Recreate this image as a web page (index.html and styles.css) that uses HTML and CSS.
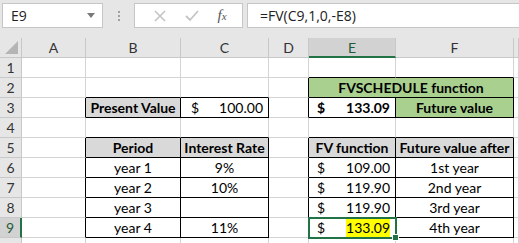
FILE: index.html
```html
<!DOCTYPE html>
<html lang="en">
<head>
  <meta charset="UTF-8">
  <title>FVSCHEDULE</title>
  <link rel="stylesheet" href="styles.css">
</head>
<body>
<div class="toolbar">
  <div class="namebox">
    <span>E9</span>
    <svg class="drop" width="8" height="5" viewBox="0 0 8 5"><path d="M0 0h8L4 5z" fill="#7a7a7a"/></svg>
  </div>
  <div class="dots"><i></i><i></i><i></i></div>
  <div class="fbuttons">
    <svg width="12" height="12" viewBox="0 0 12 12"><path d="M1 1l10 10M11 1L1 11" stroke="#c4c4c4" stroke-width="1.6"/></svg>
    <svg width="14" height="12" viewBox="0 0 14 12"><path d="M1 6l4 4 8-9" stroke="#c4c4c4" stroke-width="1.8" fill="none"/></svg>
    <span class="fx">f<small>x</small></span>
  </div>
  <div class="formula">=FV(C9,1,0,-E8)</div>
</div>

<div class="sheet">
  <!-- column headers -->
  <div class="ch corner"><span class="tri"></span></div>
  <div class="ch">A</div>
  <div class="ch">B</div>
  <div class="ch">C</div>
  <div class="ch">D</div>
  <div class="ch sel">E</div>
  <div class="ch">F</div>
  <div class="ch last"></div>

  <!-- row 1 -->
  <div class="rh">1</div>
  <div class="c"></div><div class="c"></div><div class="c"></div><div class="c"></div>
  <div class="c bb"></div><div class="c bb"></div><div class="c"></div>

  <!-- row 2 -->
  <div class="rh">2</div>
  <div class="c"></div><div class="c bb"></div><div class="c bb"></div><div class="c br"></div>
  <div class="c wide green bold mid br bb">FVSCHEDULE function</div>
  <div class="c"></div>

  <!-- row 3 -->
  <div class="rh">3</div>
  <div class="c br"></div>
  <div class="c grey bold mid br bb">Present Value</div>
  <div class="c acct wide-pad br bb"><span>$</span><span>100.00</span></div>
  <div class="c br"></div>
  <div class="c acct bold br bb"><span>$</span><span>133.09</span></div>
  <div class="c green bold mid br bb">Future value</div>
  <div class="c"></div>

  <!-- row 4 -->
  <div class="rh">4</div>
  <div class="c"></div><div class="c bb"></div><div class="c bb"></div><div class="c"></div>
  <div class="c bb"></div><div class="c bb"></div><div class="c"></div>

  <!-- row 5 -->
  <div class="rh">5</div>
  <div class="c br"></div>
  <div class="c grey bold mid br bb">Period</div>
  <div class="c grey bold mid br bb">Interest Rate</div>
  <div class="c br"></div>
  <div class="c grey bold mid br bb">FV function</div>
  <div class="c grey bold mid br bb">Future value after</div>
  <div class="c"></div>

  <!-- row 6 -->
  <div class="rh">6</div>
  <div class="c br"></div>
  <div class="c mid br bb">year 1</div>
  <div class="c mid br bb">9%</div>
  <div class="c br"></div>
  <div class="c acct br bb"><span>$</span><span>109.00</span></div>
  <div class="c mid br bb">1st year</div>
  <div class="c"></div>

  <!-- row 7 -->
  <div class="rh">7</div>
  <div class="c br"></div>
  <div class="c mid br bb">year 2</div>
  <div class="c mid br bb">10%</div>
  <div class="c br"></div>
  <div class="c acct br bb"><span>$</span><span>119.90</span></div>
  <div class="c mid br bb">2nd year</div>
  <div class="c"></div>

  <!-- row 8 -->
  <div class="rh">8</div>
  <div class="c br"></div>
  <div class="c mid br bb">year 3</div>
  <div class="c mid br bb"></div>
  <div class="c br"></div>
  <div class="c acct br bb"><span>$</span><span>119.90</span></div>
  <div class="c mid br bb">3rd year</div>
  <div class="c"></div>

  <!-- row 9 -->
  <div class="rh sel">9</div>
  <div class="c br"></div>
  <div class="c mid br bb">year 4</div>
  <div class="c mid br bb">11%</div>
  <div class="c br"></div>
  <div class="c acct br bb active"><span>$</span><span class="hl">133.09</span><i class="handle"></i></div>
  <div class="c mid br bb">4th year</div>
  <div class="c"></div>

  <!-- row 10, only its top edge is in view -->
  <div class="rh"></div>
  <div class="c"></div><div class="c"></div><div class="c"></div><div class="c"></div>
  <div class="c"></div><div class="c"></div><div class="c"></div>
</div>
</body>
</html>
```

FILE: styles.css
```css
body{
  margin: 0;
  width: 519px;
  height: 243px;
  overflow: hidden;
  background: #fff;
  font-family: Lato, "Liberation Sans", sans-serif;
  color: #000;
}

.toolbar{
  height: 38px;
  background: #e6e6e6;
  display: flex;
  align-items: flex-start;
  padding-top: 3px;
  box-sizing: border-box;
}

.namebox{
  width: 101px;
  height: 25px;
  margin-left: 2px;
  background: #fff;
  border: 1px solid #c6c6c6;
  box-sizing: border-box;
  display: flex;
  align-items: center;
  justify-content: space-between;
  padding: 0 7px 0 8px;
  font-family: "Open Sans", sans-serif;
  font-size: 14px;
  color: #222;
}

.dots{
  width: 31px;
  height: 25px;
  display: flex;
  flex-direction: column;
  align-items: center;
  justify-content: center;
  gap: 2px;
}

.dots i{
  width: 2px;
  height: 2px;
  background: #a0a0a0;
}

.fbuttons{
  width: 109px;
  height: 25px;
  background: #fff;
  border: 1px solid #c6c6c6;
  box-sizing: border-box;
  display: flex;
  align-items: center;
  justify-content: space-around;
  padding: 0 6px 0 10px;
}

.fx{
  font-family: "Liberation Serif", serif;
  font-style: italic;
  font-size: 15px;
  color: #555;
}

.fx small{
  font-size: 11px;
}

.formula{
  flex: 1;
  height: 25px;
  margin-left: 4px;
  background: #fff;
  border-left: 1px solid #c6c6c6;
  border-top: 1px solid #c6c6c6;
  border-bottom: 1px solid #c6c6c6;
  box-sizing: border-box;
  padding-left: 12px;
  font-family: "Open Sans", sans-serif;
  font-size: 14px;
  line-height: 23px;
  color: #222;
}

.sheet{
  display: grid;
  grid-template-columns: 22px 64px 95px 88px 40px 87px 118px 1fr;
  grid-auto-rows: 20px;
}

.ch, .rh{
  background: #e6e6e6;
  border-right: 1px solid #c8c8c8;
  border-bottom: 1px solid #c8c8c8;
  box-sizing: border-box;
  font-size: 14px;
  line-height: 19px;
  text-align: center;
  color: #333;
}

.ch.sel{
  background: #d2d2d2;
  border-bottom: 2px solid #217346;
  color: #1e5c38;
}

.rh.sel{
  background: #d2d2d2;
  border-right: 2px solid #217346;
  color: #1e5c38;
}

.corner{
  position: relative;
}

.tri{
  position: absolute;
  right: 3px;
  bottom: 3px;
  width: 0;
  height: 0;
  border-left: 13px solid transparent;
  border-bottom: 13px solid #b5b5b5;
}

.c{
  border-right: 1px solid #d4d4d4;
  border-bottom: 1px solid #d4d4d4;
  box-sizing: border-box;
  font-size: 14px;
  line-height: 19px;
  white-space: nowrap;
  overflow: hidden;
}

.br{ border-right-color: #000; }
.bb{ border-bottom-color: #000; }

.wide{ grid-column: span 2; }
.bold{ font-weight: bold; }
.mid{ text-align: center; }
.grey{ background: #d9d9d9; }
.green{ background: #a9d08e; }

.acct{
  display: flex;
  justify-content: space-between;
  padding: 0 5px 0 8px;
}

.acct.wide-pad{
  padding-left: 10px;
}

.active{
  position: relative;
  overflow: visible;
  outline: 2px solid #217346;
  outline-offset: -1px;
}

.hl{
  background: #ffff00;
}

.handle{
  position: absolute;
  right: -4px;
  bottom: -4px;
  width: 5px;
  height: 5px;
  background: #217346;
  border: 1px solid #fff;
}
```
